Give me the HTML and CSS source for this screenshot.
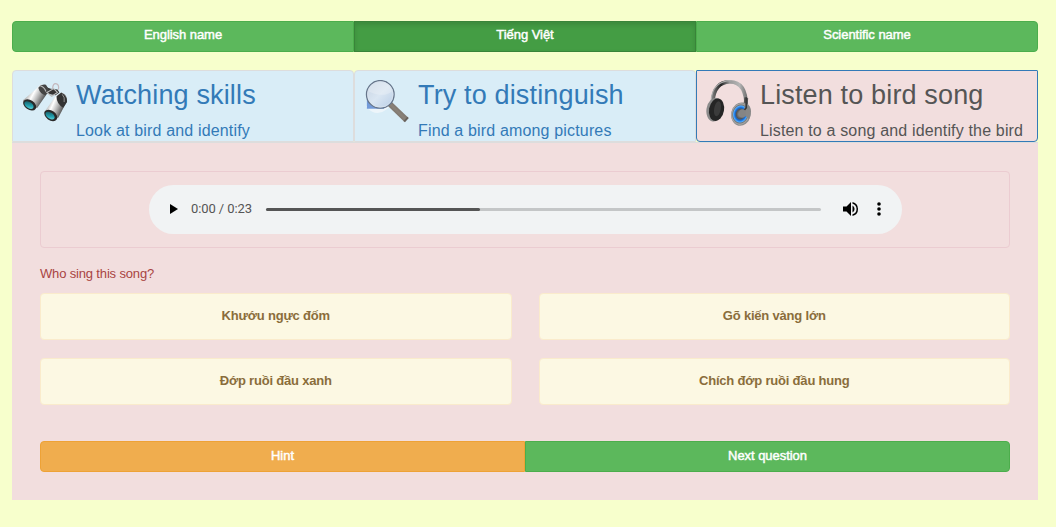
FILE: index.html
```html
<!DOCTYPE html>
<html lang="en">
<head>
<meta charset="utf-8">
<title>Bird quiz</title>
<link rel="stylesheet" href="styles.css">
</head>
<body>
<nav class="btn-group languages">
  <a class="btn btn-success">English name</a>
  <a class="btn btn-success active">Tiếng Việt</a>
  <a class="btn btn-success">Scientific name</a>
</nav>
<nav class="tabs">
  <a class="tab">
    <svg class="tab-icon" viewBox="0 0 48 48">
      <defs>
        <linearGradient id="barrel" x1="0" y1="0.1" x2="1" y2=".6"><stop offset="0" stop-color="#333"/><stop offset=".2" stop-color="#999"/><stop offset=".45" stop-color="#fff"/><stop offset=".65" stop-color="#b5b5b5"/><stop offset="1" stop-color="#222"/></linearGradient>
        <linearGradient id="lens" x1="0" y1="0" x2="1" y2="1"><stop offset="0" stop-color="#134a52"/><stop offset=".6" stop-color="#25a5b4"/><stop offset="1" stop-color="#7de3e6"/></linearGradient>
      </defs>
      <path d="M32 9q0-6 4-5 3 1 2 6" fill="none" stroke="#c5b8bd" stroke-width="1.300"/>
      <path d="M18 8l5-3 4 3 3 1 7 1 2 3-4 3-10-2-5 2z" fill="#343434"/>
      <path d="M1 21L15 9 19 5q5-1 8 6l-2 5-9 13Q3 30 1 21z" fill="url(#barrel)"/>
      <path d="M17 8q3-4 8-3l3 5-3 6q-6-1-8-8z" fill="#444"/>
      <path d="M19 6q4 1 6 6M26 13l7-4 4 4-6 4z" fill="none" stroke="#bbb" stroke-width="1.200"/>
      <path d="M23 34l12-17 6-4q6 1 6 9l-9 17Q27 43 23 34z" fill="url(#barrel)"/>
      <path d="M36 17l5-4q6 3 6 10l-4 6q-7-4-7-12z" fill="#333"/>
      <path d="M42 15q3 3 2 8" fill="none" stroke="#999"/>
      <g transform="rotate(35 8 26)"><ellipse cx="8" cy="26" rx="7.500" ry="5" fill="#292929"/><ellipse cx="7.500" cy="26.500" rx="5.400" ry="3.200" fill="url(#lens)"/></g>
      <g transform="rotate(35 30 37)"><ellipse cx="30" cy="37" rx="7.500" ry="5" fill="#292929"/><ellipse cx="29.500" cy="37.500" rx="5.400" ry="3.200" fill="url(#lens)"/></g>
    </svg>
    <span class="tab-text"><span class="tab-title">Watching skills</span><span class="tab-note">Look at bird and identify</span></span>
  </a>
  <a class="tab">
    <svg class="tab-icon" viewBox="0 0 48 48">
      <defs>
        <linearGradient id="glass" x1="0" y1="0" x2="1" y2="1"><stop offset="0" stop-color="#c5d2e2"/><stop offset=".5" stop-color="#dae6f2"/><stop offset="1" stop-color="#b7cde6"/></linearGradient>
        <linearGradient id="handle" x1="0" y1="1" x2="1" y2="0"><stop offset="0" stop-color="#4f4944"/><stop offset=".5" stop-color="#8a8279"/><stop offset="1" stop-color="#4f4a46"/></linearGradient>
      </defs>
      <path d="M3 29q10 10 20 2 3-2 4-5l-4-1L2 27z" fill="#edf5fa"/>
      <path d="M3 20h18v10H3z" fill="#729ad9"/>
      <path d="M25 27l4-4 17 16-4 4.500z" fill="url(#handle)"/>
      <path d="M42 43.500l4-4.500" stroke="#68615b" stroke-width="2"/>
      <circle cx="17" cy="15" r="14.400" fill="url(#glass)" stroke="#66758a" stroke-width="1.400"/>
      <path d="M5 12a12 10 0 0 1 24 0q-9 7-24 0z" fill="#eef3f8" opacity=".4"/>
      <circle cx="17" cy="15" r="13.300" fill="none" stroke="#dce5ee" stroke-width=".7"/>
    </svg>
    <span class="tab-text"><span class="tab-title">Try to distinguish</span><span class="tab-note">Find a bird among pictures</span></span>
  </a>
  <a class="tab tab-active">
    <svg class="tab-icon" viewBox="0 0 48 48">
      <defs>
        <linearGradient id="band"><stop offset="0" stop-color="#777"/><stop offset=".25" stop-color="#222"/><stop offset=".5" stop-color="#999"/><stop offset=".8" stop-color="#b5b5b5"/><stop offset="1" stop-color="#777"/></linearGradient>
        <radialGradient id="cup"><stop offset="0" stop-color="#aaa"/><stop offset=".45" stop-color="#555"/><stop offset=".6" stop-color="#126bd7"/><stop offset=".77" stop-color="#4faaff"/><stop offset=".86" stop-color="#777"/><stop offset="1" stop-color="#bbb"/></radialGradient>
      </defs>
      <path d="M7 23C8 8 15 2 25 2c12 0 17 10 17 26" fill="none" stroke="url(#band)" stroke-width="4"/>
      <path d="M5.500 21C6 7 15 .6 26 .6" fill="none" stroke="#aaa" stroke-width="1.200"/>
      <path d="M40 18l4 1-1 11-4-2z" fill="#555"/>
      <ellipse cx="9" cy="31" rx="8.500" ry="12.500" transform="rotate(10 9 31)" fill="#8b8b8b"/>
      <ellipse cx="11" cy="31" rx="7.800" ry="11.800" transform="rotate(10 11 31)" fill="#252525"/>
      <ellipse cx="12" cy="30" rx="3.500" ry="8" transform="rotate(10 12 30)" fill="#3b3b3b"/>
      <ellipse cx="36.500" cy="35.500" rx="10.200" ry="12.300" transform="rotate(12 36 35)" fill="#8e8e8e"/>
      <ellipse cx="36" cy="35.500" rx="9.200" ry="11" transform="rotate(12 36 35)" fill="url(#cup)"/>
      <path d="M38 35l4-11q8 5 3 17z" fill="#888"/>
      <path d="M42 18l0 11-4 5" fill="none" stroke="#383838" stroke-width="1.700"/>
      <ellipse cx="38" cy="35" rx="3.500" ry="4.500" fill="#858585"/>
    </svg>
    <span class="tab-text"><span class="tab-title">Listen to bird song</span><span class="tab-note">Listen to a song and identify the bird</span></span>
  </a>
</nav>
<main class="panel">
  <div class="audio-box">
    <div class="player">
      <svg class="play" viewBox="0 0 8 10"><path d="M0 0l8 5-8 5z"/></svg>
      <span class="time">0:00 / 0:23</span>
      <div class="track"><div class="buffered"></div></div>
      <svg class="volume" viewBox="0 0 18 18"><path d="M2 6.500v5h3.500L10 16V2L5.500 6.500zM11.500 5.500v7a4 4 0 0 0 0-7zM11.500 2v1.700a5.500 5.500 0 0 1 0 10.600V16a7.200 7.200 0 0 0 0-14z"/></svg>
      <svg class="more" viewBox="0 0 4 14"><circle cx="2" cy="2" r="1.800"/><circle cx="2" cy="7" r="1.800"/><circle cx="2" cy="12" r="1.800"/></svg>
    </div>
  </div>
  <p class="question">Who sing this song?</p>
  <div class="answers">
    <a class="answer">Khướu ngực đốm</a>
    <a class="answer">Gõ kiến vàng lớn</a>
    <a class="answer">Đớp ruồi đầu xanh</a>
    <a class="answer">Chích đớp ruồi đầu hung</a>
  </div>
  <div class="btn-group">
    <a class="btn btn-warning">Hint</a>
    <a class="btn btn-success">Next question</a>
  </div>
</main>
</body>
</html>
```
FILE: styles.css
```css
* { box-sizing: border-box; }
body {
  margin: 0;
  padding: 21px 18px 27px 12px;
  background: #f7ffcc;
  font: 13px/18px "Liberation Sans", Arial, sans-serif;
}
.btn-group { display: flex; height: 31px; }
.btn {
  flex: 1 1 0;
  border: 1px solid;
  padding-top: 4px;
  color: #fff;
  font-size: 13px;
  -webkit-text-stroke: .45px #fff;
  letter-spacing: -.05px;
  text-align: center;
}
.btn:first-child { border-radius: 4px 0 0 4px; }
.btn:last-child { border-radius: 0 4px 4px 0; }
.btn-success { background: #5cb85c; border-color: #4cae4c; }
.btn-warning { background: #f0ad4e; border-color: #eea236; }
.panel .btn { padding-top: 5px; }
.btn.active {
  background: #449d44;
  border-color: #398439;
  box-shadow: inset 0 3px 5px rgba(0, 0, 0, .125);
}
.tabs { display: flex; height: 73px; margin-top: 18px; border-bottom: 1px solid #ddd; }
.tab {
  flex: 1 1 0;
  display: flex;
  height: 72px;
  padding: 9px 0 0 9px;
  border: 1px solid #ddd;
  border-radius: 4px 4px 0 0;
  background: #d9edf7;
  color: #337ab7;
}
.tab-active {
  border-color: #337ab7;
  border-radius: 1px 1px 4px 4px;
  background: #f2dede;
  color: #555;
}
.tab-icon { width: 46px; height: 46px; margin-right: 8px; flex: none; }
.tab-text { display: flex; flex-direction: column; white-space: nowrap; }
.tab-title { font-size: 27px; line-height: 30px; letter-spacing: .15px; }
.tab-note { margin-top: 11px; font-size: 16px; line-height: 20px; letter-spacing: .16px; }
.panel { height: 357px; padding: 28px; background: #f2dede; }
.audio-box {
  display: flex;
  justify-content: center;
  height: 77px;
  padding: 13px 0 0 1px;
  border: 1px solid #ebccd1;
  border-radius: 4px;
}
.player {
  display: flex;
  align-items: center;
  width: 753px;
  height: 49px;
  padding: 0 21px;
  border-radius: 25px;
  background: #f1f3f4;
}
.play { width: 8px; height: 10px; margin-top: -2px; }
.time { width: 88px; margin-top: -2px; padding-left: 13px; color: #555; font: 13px/18px Roboto, sans-serif; letter-spacing: -.1px; white-space: nowrap; }
.track { flex: 1; height: 3px; border-radius: 2px; background: #c4c6c7; }
.buffered { width: 38.6%; height: 3px; border-radius: 2px; background: #555; }
.volume { width: 18px; height: 18px; margin: -2px 0 0 20px; }
.more { width: 4px; height: 14px; margin: -2px 0 0 18px; }
.question { margin: 17px 0 10px; color: #a94442; letter-spacing: -.16px; }
.answers { display: grid; grid-template-columns: 1fr 1fr; gap: 18px 27px; margin-bottom: 36px; }
.answer {
  height: 47px;
  padding-top: 13px;
  border: 1px solid #faebcc;
  border-radius: 4px;
  background: #fcf8e3;
  color: #8a6d3b;
  font-weight: bold;
  letter-spacing: -.2px;
  text-align: center;
}
```
